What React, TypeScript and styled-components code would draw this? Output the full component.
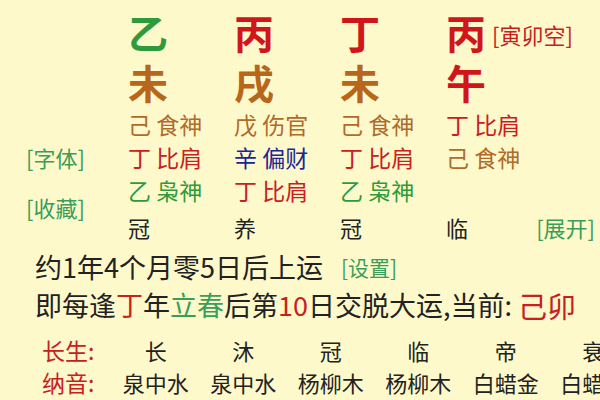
import React from "react";
import styled, { createGlobalStyle } from "styled-components";

const GlobalStyle = createGlobalStyle`
  html, body {
    margin: 0;
    padding: 0;
    width: 600px;
    height: 400px;
    overflow: hidden;
    background: #fdf9ca;
    font-family: "Noto Sans CJK SC", "Noto Sans", sans-serif;
    color: #222;
  }
`;

const C = {
  green: "#2f9a3c",
  red: "#d0161b",
  brown: "#b8661c",
  softBrown: "#b06a2a",
  softRed: "#c8201f",
  blue: "#1b2597",
  link: "#3a9d5c",
  ink: "#222",
};

const Page = styled.div`
  width: 600px;
  height: 400px;
  display: flex;
  flex-direction: column;
  overflow: hidden;
`;

const Top = styled.div`
  display: flex;
  padding-top: 7px;
`;

const SideLinks = styled.div`
  width: 102px;
  padding-left: 26px;
  padding-top: 136px;
  display: flex;
  flex-direction: column;
  gap: 22px;
`;

const Link = styled.span<{ $size?: number; $gap?: number }>`
  color: ${C.link};
  font-size: ${(p) => p.$size ?? 22}px;
  line-height: 28px;
  white-space: nowrap;
  margin-left: ${(p) => p.$gap ?? 0}px;
`;

const Pillars = styled.div`
  display: grid;
  grid-template-columns: 106px 106px 106px 1fr;
  grid-template-rows: 50px 50px 33px 33px 33px 42px;
  flex: 1;
`;

const Cell = styled.div`
  display: flex;
  align-items: center;
  white-space: nowrap;
  overflow: visible;
`;

const LastCell = styled(Cell)`
  justify-content: space-between;
  padding-right: 5px;
`;

const Big = styled.span<{ $color: string }>`
  display: block;
  color: ${(p) => p.$color};
  font-size: 40px;
  font-weight: 700;
  line-height: 40px;
  height: 40px;
`;

const Void = styled.span`
  color: ${C.softRed};
  font-size: 22px;
  line-height: 26px;
  margin-left: 6px;
  margin-top: 4px;
`;

const Hidden = styled.span<{ $color: string }>`
  display: block;
  color: ${(p) => p.$color};
  font-size: 23px;
  line-height: 28px;
`;

const Stage = styled.span`
  color: ${C.ink};
  font-size: 22px;
  line-height: 28px;
`;

const Line = styled.div`
  padding-left: 35px;
  font-size: 27px;
  line-height: 38px;
  height: 38px;
  color: ${C.ink};
  white-space: nowrap;
  display: flex;
  align-items: center;
`;

const Mark = styled.span<{ $color: string; $size?: number }>`
  color: ${(p) => p.$color};
  ${(p) => (p.$size ? `font-size: ${p.$size}px;` : "")}
`;

const Table = styled.div`
  margin-top: 10px;
  padding-left: 42px;
  display: grid;
  grid-template-columns: 70px repeat(6, 87.5px);
  grid-auto-rows: 32px;
  white-space: nowrap;
`;

const RowLabel = styled.div`
  color: ${C.softRed};
  font-size: 23px;
  display: flex;
  align-items: center;
`;

const TableCell = styled.div`
  font-size: 22px;
  color: ${C.ink};
  display: flex;
  align-items: center;
  justify-content: center;
`;

type HS = [string, string, string];

const stems: [string, string][] = [
  ["乙", C.green],
  ["丙", C.red],
  ["丁", C.red],
  ["丙", C.red],
];
const branches: [string, string][] = [
  ["未", C.brown],
  ["戌", C.brown],
  ["未", C.brown],
  ["午", C.red],
];

const hidden: (HS | null)[][] = [
  [
    ["己", "食神", C.softBrown],
    ["戊", "伤官", C.softBrown],
    ["己", "食神", C.softBrown],
    ["丁", "比肩", C.softRed],
  ],
  [
    ["丁", "比肩", C.softRed],
    ["辛", "偏财", C.blue],
    ["丁", "比肩", C.softRed],
    ["己", "食神", C.softBrown],
  ],
  [
    ["乙", "枭神", C.green],
    ["丁", "比肩", C.softRed],
    ["乙", "枭神", C.green],
    null,
  ],
];

const stages = ["冠", "养", "冠", "临"];
const longLife = ["长", "沐", "冠", "临", "帝", "衰"];
const nayin = ["泉中水", "泉中水", "杨柳木", "杨柳木", "白蜡金", "白蜡金"];

export default function App() {
  return (
    <Page>
      <GlobalStyle />
      <Top>
        <SideLinks>
          <Link>[字体]</Link>
          <Link>[收藏]</Link>
        </SideLinks>
        <Pillars>
          {stems.map(([ch, col], i) => (
            <Cell key={"s" + i}>
              <Big $color={col}>{ch}</Big>
              {i === 3 && <Void>[寅卯空]</Void>}
            </Cell>
          ))}
          {branches.map(([ch, col], i) => (
            <Cell key={"b" + i}>
              <Big $color={col}>{ch}</Big>
            </Cell>
          ))}
          {hidden.map((row, r) =>
            row.map((h, i) => (
              <Cell key={`h${r}-${i}`}>
                {h && (
                  <Hidden $color={h[2]}>
                    {h[0]} {h[1]}
                  </Hidden>
                )}
              </Cell>
            ))
          )}
          {stages.map((s, i) =>
            i === 3 ? (
              <LastCell key={"g" + i}>
                <Stage>{s}</Stage>
                <Link>[展开]</Link>
              </LastCell>
            ) : (
              <Cell key={"g" + i}>
                <Stage>{s}</Stage>
              </Cell>
            )
          )}
        </Pillars>
      </Top>
      <Line>
        约1年4个月零5日后上运
        <Link $size={21} $gap={18}>
          [设置]
        </Link>
      </Line>
      <Line>
        即每逢<Mark $color={C.softRed}>丁</Mark>年<Mark $color={C.link}>立春</Mark>后第
        <Mark $color={C.softRed}>10</Mark>日交脱大运,当前:&nbsp;
        <Mark $color={C.softRed} $size={29}>
          己卯
        </Mark>
      </Line>
      <Table>
        <RowLabel>长生:</RowLabel>
        {longLife.map((v, i) => (
          <TableCell key={"l" + i}>{v}</TableCell>
        ))}
        <RowLabel>纳音:</RowLabel>
        {nayin.map((v, i) => (
          <TableCell key={"n" + i}>{v}</TableCell>
        ))}
      </Table>
    </Page>
  );
}
